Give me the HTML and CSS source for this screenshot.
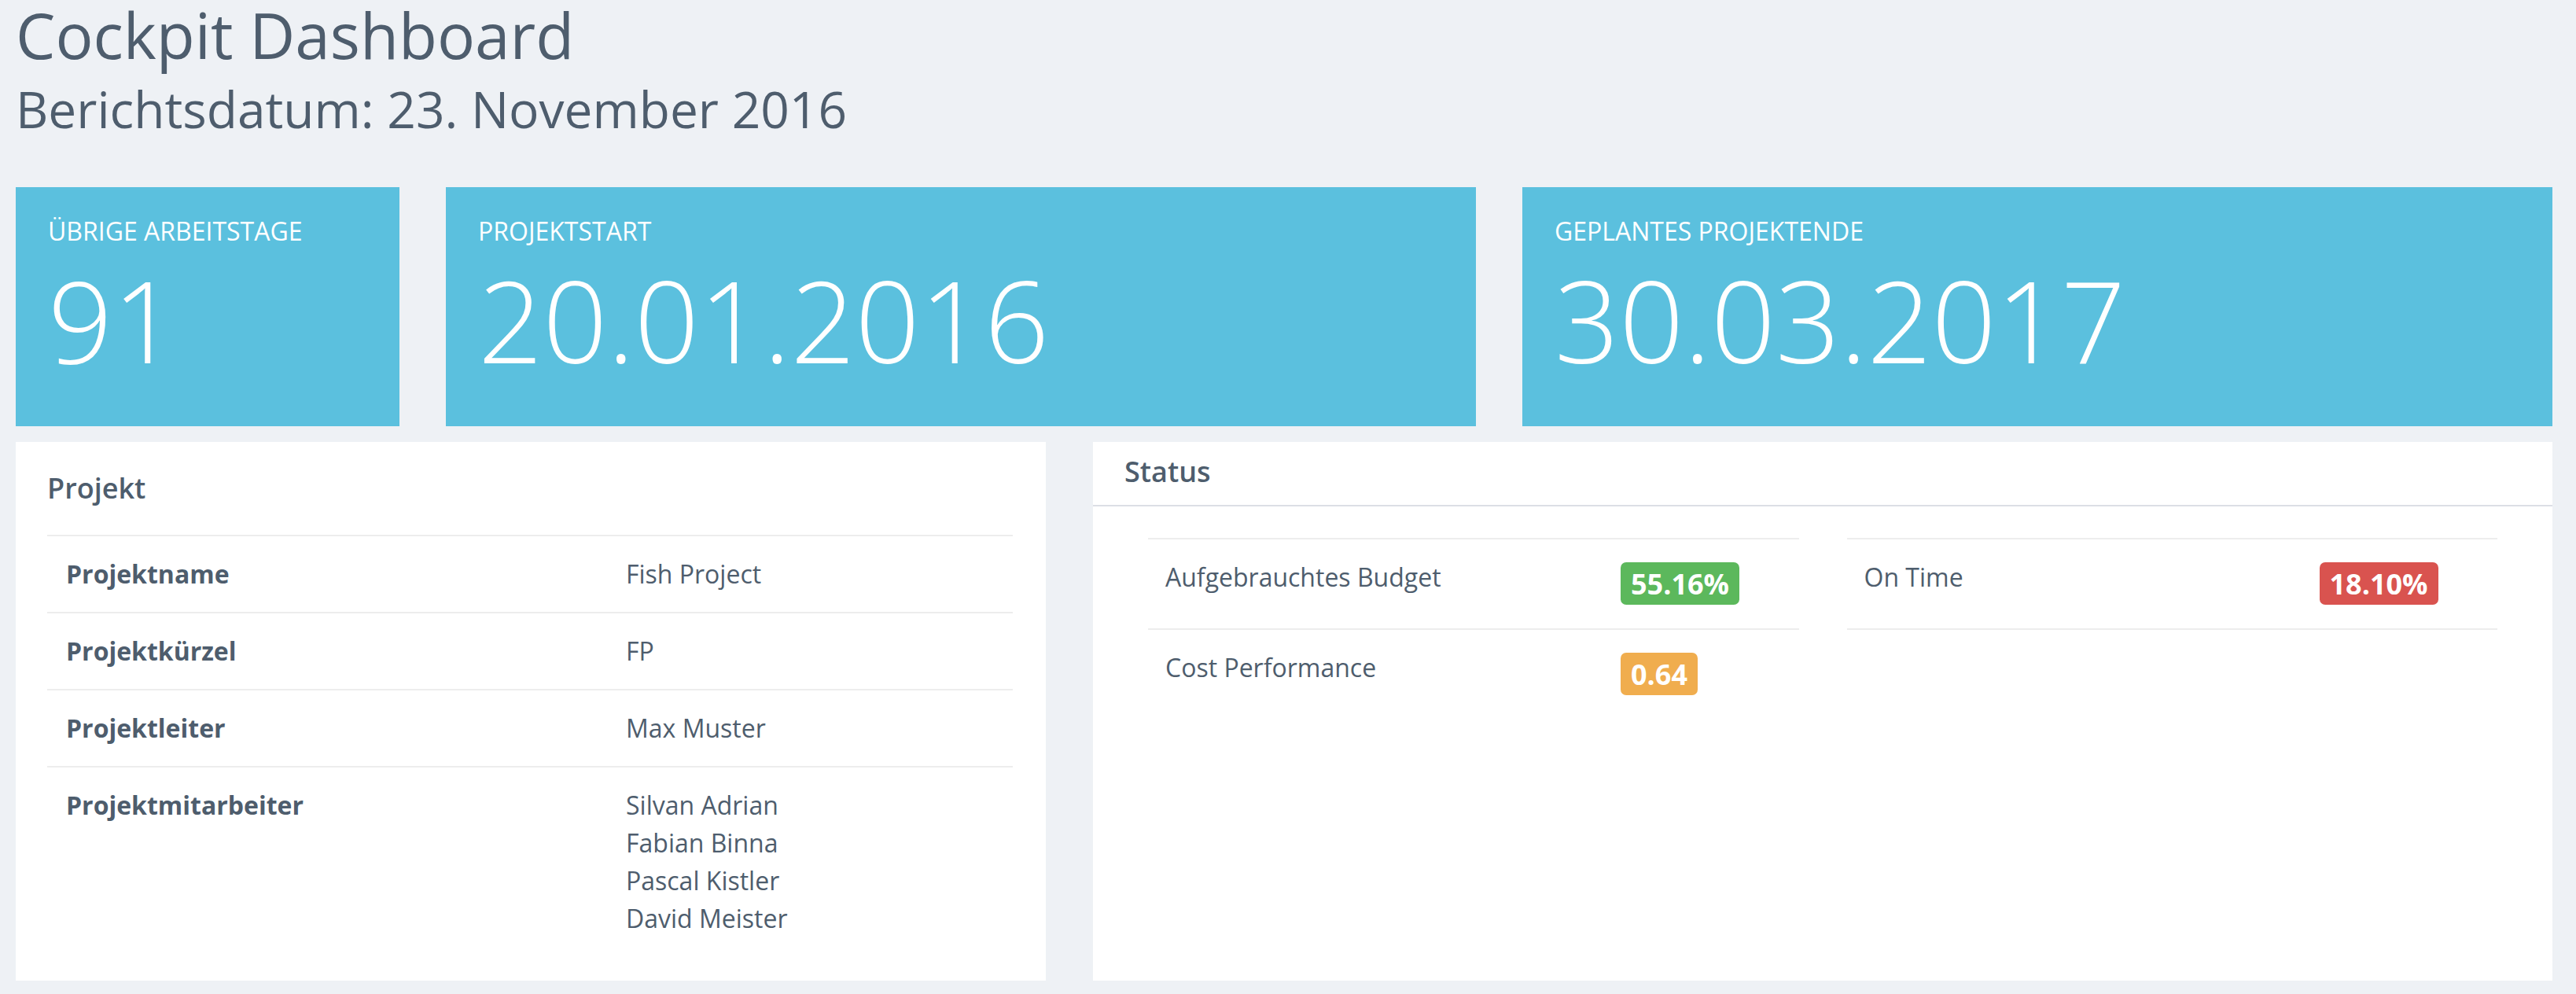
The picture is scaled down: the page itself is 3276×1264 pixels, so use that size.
FILE: index.html
```html
<!DOCTYPE html>
<html lang="de">
<head>
<meta charset="utf-8">
<title>Cockpit Dashboard</title>
<link rel="stylesheet" href="styles.css">
</head>
<body>
<div class="page">
  <header class="page-header">
    <h1 class="title">Cockpit Dashboard</h1>
    <h2 class="subtitle">Berichtsdatum: 23. November 2016</h2>
  </header>

  <section class="tiles">
    <div class="tile">
      <div class="tile-label">Übrige Arbeitstage</div>
      <div class="tile-value">91</div>
    </div>
    <div class="tile">
      <div class="tile-label">Projektstart</div>
      <div class="tile-value">20.01.2016</div>
    </div>
    <div class="tile">
      <div class="tile-label">Geplantes Projektende</div>
      <div class="tile-value">30.03.2017</div>
    </div>
  </section>

  <section class="panels">
    <div class="panel panel-project">
      <h3 class="panel-title">Projekt</h3>
      <div class="info-table">
        <div class="info-row">
          <div class="info-label">Projektname</div>
          <div class="info-value">Fish Project</div>
        </div>
        <div class="info-row">
          <div class="info-label">Projektkürzel</div>
          <div class="info-value">FP</div>
        </div>
        <div class="info-row">
          <div class="info-label">Projektleiter</div>
          <div class="info-value">Max Muster</div>
        </div>
        <div class="info-row">
          <div class="info-label">Projektmitarbeiter</div>
          <div class="info-value">
            <div>Silvan Adrian</div>
            <div>Fabian Binna</div>
            <div>Pascal Kistler</div>
            <div>David Meister</div>
          </div>
        </div>
      </div>
    </div>

    <div class="panel panel-status">
      <div class="status-header">
        <h3 class="panel-title status-title">Status</h3>
      </div>
      <div class="status-body">
        <div class="status-col">
          <div class="status-row">
            <div class="status-label">Aufgebrauchtes Budget</div>
            <div><span class="badge badge-green">55.16%</span></div>
          </div>
          <div class="status-row">
            <div class="status-label">Cost Performance</div>
            <div><span class="badge badge-orange">0.64</span></div>
          </div>
        </div>
        <div class="status-col">
          <div class="status-row status-row-last">
            <div class="status-label">On Time</div>
            <div><span class="badge badge-red">18.10%</span></div>
          </div>
        </div>
      </div>
    </div>
  </section>
</div>
</body>
</html>
```

FILE: styles.css
```css
* {
  box-sizing: border-box;
}

html, body {
  margin: 0;
  padding: 0;
  background: #eef1f5;
}

body {
  font-family: "Open Sans", "DejaVu Sans", sans-serif;
  color: #4e5d6d;
  font-size: 32px;
  line-height: 48px;
}

.page {
  padding: 0 30px 0 20px;
}

.page-header {
  padding: 0;
}

.title {
  margin: 0;
  font-size: 80px;
  line-height: 88px;
  font-weight: 400;
  color: #4e5d6d;
}

.subtitle {
  margin: 11px 0 0 0;
  font-size: 64px;
  line-height: 80px;
  font-weight: 400;
  color: #4e5d6d;
}

.tiles {
  margin-top: 59px;
  display: grid;
  grid-template-columns: 488fr 1310fr 1310fr;
  column-gap: 59px;
}

.tile {
  background: #5bc0de;
  color: #ffffff;
  height: 304px;
  padding: 32px 40px 0 41px;
}

.tile-label {
  text-transform: uppercase;
  font-size: 32px;
  line-height: 48px;
  font-weight: 400;
}

.tile-value {
  margin-top: 16px;
  font-size: 144px;
  line-height: 144px;
  font-weight: 300;
}

.panels {
  margin-top: 20px;
  display: grid;
  grid-template-columns: 1310fr 1856fr;
  column-gap: 60px;
}

.panel {
  background: #ffffff;
}

.panel-project {
  padding: 35px 42px 31px 40px;
}

.panel-title {
  margin: 0;
  font-size: 36px;
  line-height: 48px;
  font-weight: 600;
  color: #4e5d6d;
}

.info-table {
  margin-top: 35px;
}

.info-row {
  display: grid;
  grid-template-columns: 712px 1fr;
  border-top: 2px solid #ededed;
  padding: 24px 0 24px 24px;
}

.info-label {
  font-weight: 700;
}

.status-header {
  padding: 14px 40px 0 40px;
  height: 82px;
  border-bottom: 2px solid #dcdfe5;
}

.status-body {
  display: grid;
  grid-template-columns: 1fr 1fr;
  column-gap: 61px;
  padding: 40px 70px 0 70px;
}

.status-row {
  display: grid;
  grid-template-columns: 579px auto;
  height: 115px;
  border-top: 2px solid #ededed;
  padding: 24px 0 0 22px;
}

.status-row-last {
  border-bottom: 2px solid #ededed;
  height: 117px;
}

.badge {
  display: inline-block;
  margin-top: 5px;
  padding: 10px 13px 8px 13px;
  font-size: 36px;
  line-height: 36px;
  font-weight: 700;
  color: #ffffff;
  border-radius: 7px;
}

.badge-green {
  background: #5cb85c;
}

.badge-orange {
  background: #f0ad4e;
}

.badge-red {
  background: #d9534f;
}
```
